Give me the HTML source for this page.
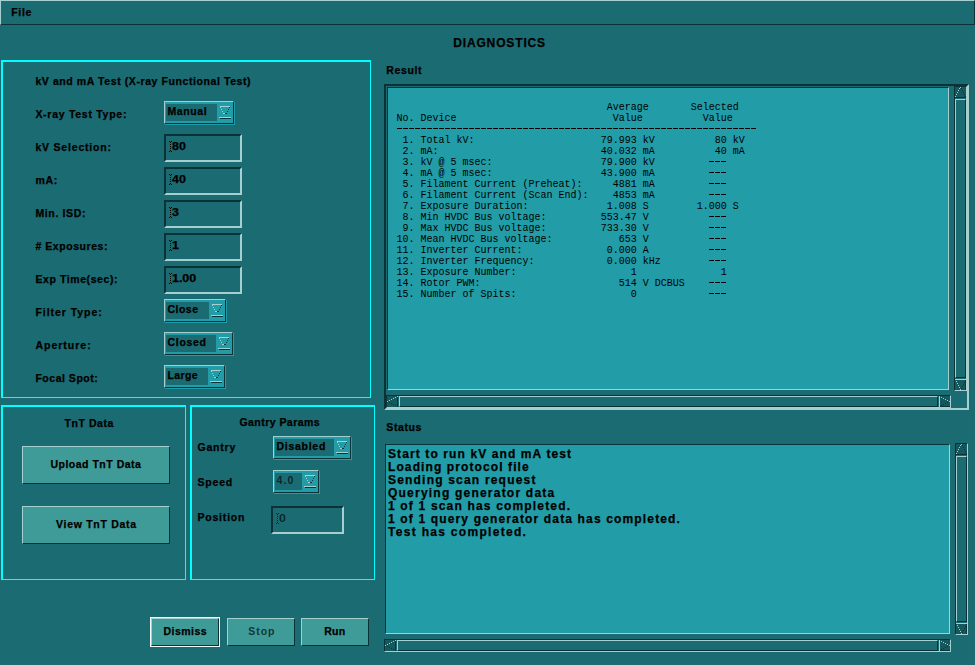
<!DOCTYPE html>
<html><head><meta charset="utf-8"><style>
html,body{margin:0;padding:0;width:975px;height:665px;overflow:hidden;background:#1b6b73;}
.a{position:absolute;box-sizing:border-box;}
.t{position:absolute;white-space:pre;}
.b{-webkit-text-stroke:0.25px #000;}
svg{shape-rendering:crispEdges;}
</style></head><body>
<div class="a" style="left:0px;top:0px;width:975px;height:25px;background:#1b6b73;border-top:1px solid #a6cfcf;border-left:1px solid #a6cfcf;border-right:1px solid #0b3236;border-bottom:1px solid #0b3236;"></div>
<div class="t b" style="left:11.20px;top:7.31px;font:bold 10.5px/10.5px 'Liberation Sans',sans-serif;letter-spacing:0.684px;color:#000;">File</div>
<div class="t b" style="left:453.20px;top:37.04px;font:bold 12px/12px 'Liberation Sans',sans-serif;letter-spacing:0.857px;color:#000;">DIAGNOSTICS</div>
<div class="a" style="left:1px;top:60px;width:370px;height:338px;border-top:2px solid #00ffff;border-left:2px solid #00ffff;border-right:1px solid #00ffff;border-bottom:1px solid #00ffff;"></div>
<div class="t b" style="left:35.40px;top:76.01px;font:bold 10.5px/10.5px 'Liberation Sans',sans-serif;letter-spacing:0.587px;color:#000;">kV and mA Test (X-ray Functional Test)</div>
<div class="t b" style="left:35.40px;top:109.21px;font:bold 10.5px/10.5px 'Liberation Sans',sans-serif;letter-spacing:0.724px;color:#000;">X-ray Test Type:</div>
<div class="t b" style="left:35.40px;top:142.16px;font:bold 10.5px/10.5px 'Liberation Sans',sans-serif;letter-spacing:0.805px;color:#000;">kV Selection:</div>
<div class="t b" style="left:35.40px;top:175.11px;font:bold 10.5px/10.5px 'Liberation Sans',sans-serif;letter-spacing:0.741px;color:#000;">mA:</div>
<div class="t b" style="left:35.40px;top:208.06px;font:bold 10.5px/10.5px 'Liberation Sans',sans-serif;letter-spacing:0.648px;color:#000;">Min. ISD:</div>
<div class="t b" style="left:35.40px;top:241.01px;font:bold 10.5px/10.5px 'Liberation Sans',sans-serif;letter-spacing:0.559px;color:#000;"># Exposures:</div>
<div class="t b" style="left:35.40px;top:273.96px;font:bold 10.5px/10.5px 'Liberation Sans',sans-serif;letter-spacing:0.584px;color:#000;">Exp Time(sec):</div>
<div class="t b" style="left:35.40px;top:306.91px;font:bold 10.5px/10.5px 'Liberation Sans',sans-serif;letter-spacing:0.953px;color:#000;">Filter Type:</div>
<div class="t b" style="left:35.40px;top:339.86px;font:bold 10.5px/10.5px 'Liberation Sans',sans-serif;letter-spacing:1.005px;color:#000;">Aperture:</div>
<div class="t b" style="left:35.40px;top:372.81px;font:bold 10.5px/10.5px 'Liberation Sans',sans-serif;letter-spacing:0.523px;color:#000;">Focal Spot:</div>
<div class="a" style="left:164px;top:101px;width:70px;height:23px;background:#229ca6;border-top:1px solid #a6cfcf;border-left:1px solid #a6cfcf;border-right:1px solid #0b3236;border-bottom:1px solid #0b3236;"></div>
<div class="a" style="left:234px;top:102px;width:1px;height:23px;background:#229ca6;"></div>
<div class="a" style="left:165px;top:124px;width:70px;height:1px;background:#229ca6;"></div>
<div class="a" style="left:166px;top:104px;width:51px;height:17px;background:#1b6b73;"></div>
<div class="t b" style="left:167.50px;top:106.31px;font:bold 10.5px/10.5px 'Liberation Sans',sans-serif;letter-spacing:0.609px;color:#000;">Manual</div>
<svg class="a" style="left:219px;top:106px" width="13" height="14"><rect x="1" y="0" width="10" height="1" fill="#a6cfcf"/><rect x="1" y="1" width="1" height="1" fill="#a6cfcf"/><rect x="2" y="3" width="1" height="1" fill="#a6cfcf"/><rect x="3" y="5" width="1" height="1" fill="#a6cfcf"/><rect x="4" y="7" width="1" height="1" fill="#a6cfcf"/><rect x="5" y="7" width="1" height="1" fill="#a6cfcf"/><rect x="10" y="1" width="1" height="1" fill="#0b3236"/><rect x="9" y="3" width="1" height="1" fill="#0b3236"/><rect x="8" y="5" width="1" height="1" fill="#0b3236"/><rect x="7" y="7" width="1" height="1" fill="#0b3236"/><rect x="6" y="7" width="1" height="1" fill="#0b3236"/><rect x="0" y="11" width="12" height="1" fill="#a6cfcf"/><rect x="1" y="12" width="11" height="1" fill="#0b3236"/></svg>
<div class="a" style="left:164px;top:134px;width:78px;height:28px;background:#1b6b73;border-top:2px solid #0b3236;border-left:2px solid #0b3236;border-right:2px solid #a6cfcf;border-bottom:2px solid #a6cfcf;"></div>
<svg class="a" style="left:169px;top:141px" width="3" height="11"><rect x="0" y="0" width="1" height="1" fill="#000"/><rect x="2" y="0" width="1" height="1" fill="#000"/><rect x="1" y="1" width="1" height="1" fill="#000"/><rect x="1" y="3" width="1" height="1" fill="#000"/><rect x="1" y="5" width="1" height="1" fill="#000"/><rect x="1" y="7" width="1" height="1" fill="#000"/><rect x="1" y="9" width="1" height="1" fill="#000"/><rect x="0" y="10" width="1" height="1" fill="#000"/><rect x="2" y="10" width="1" height="1" fill="#000"/></svg>
<div class="t b" style="left:171.50px;top:141.39px;font:bold 11px/11px 'Liberation Sans',sans-serif;letter-spacing:0.000px;color:#000;transform:scaleX(1.13);transform-origin:0 0;">80</div>
<div class="a" style="left:164px;top:167px;width:78px;height:28px;background:#1b6b73;border-top:2px solid #0b3236;border-left:2px solid #0b3236;border-right:2px solid #a6cfcf;border-bottom:2px solid #a6cfcf;"></div>
<svg class="a" style="left:169px;top:174px" width="3" height="11"><rect x="0" y="0" width="1" height="1" fill="#000"/><rect x="2" y="0" width="1" height="1" fill="#000"/><rect x="1" y="1" width="1" height="1" fill="#000"/><rect x="1" y="3" width="1" height="1" fill="#000"/><rect x="1" y="5" width="1" height="1" fill="#000"/><rect x="1" y="7" width="1" height="1" fill="#000"/><rect x="1" y="9" width="1" height="1" fill="#000"/><rect x="0" y="10" width="1" height="1" fill="#000"/><rect x="2" y="10" width="1" height="1" fill="#000"/></svg>
<div class="t b" style="left:171.50px;top:174.39px;font:bold 11px/11px 'Liberation Sans',sans-serif;letter-spacing:0.000px;color:#000;transform:scaleX(1.13);transform-origin:0 0;">40</div>
<div class="a" style="left:164px;top:200px;width:78px;height:28px;background:#1b6b73;border-top:2px solid #0b3236;border-left:2px solid #0b3236;border-right:2px solid #a6cfcf;border-bottom:2px solid #a6cfcf;"></div>
<svg class="a" style="left:169px;top:207px" width="3" height="11"><rect x="0" y="0" width="1" height="1" fill="#000"/><rect x="2" y="0" width="1" height="1" fill="#000"/><rect x="1" y="1" width="1" height="1" fill="#000"/><rect x="1" y="3" width="1" height="1" fill="#000"/><rect x="1" y="5" width="1" height="1" fill="#000"/><rect x="1" y="7" width="1" height="1" fill="#000"/><rect x="1" y="9" width="1" height="1" fill="#000"/><rect x="0" y="10" width="1" height="1" fill="#000"/><rect x="2" y="10" width="1" height="1" fill="#000"/></svg>
<div class="t b" style="left:171.50px;top:207.39px;font:bold 11px/11px 'Liberation Sans',sans-serif;letter-spacing:0.000px;color:#000;transform:scaleX(1.13);transform-origin:0 0;">3</div>
<div class="a" style="left:164px;top:233px;width:78px;height:28px;background:#1b6b73;border-top:2px solid #0b3236;border-left:2px solid #0b3236;border-right:2px solid #a6cfcf;border-bottom:2px solid #a6cfcf;"></div>
<svg class="a" style="left:169px;top:240px" width="3" height="11"><rect x="0" y="0" width="1" height="1" fill="#000"/><rect x="2" y="0" width="1" height="1" fill="#000"/><rect x="1" y="1" width="1" height="1" fill="#000"/><rect x="1" y="3" width="1" height="1" fill="#000"/><rect x="1" y="5" width="1" height="1" fill="#000"/><rect x="1" y="7" width="1" height="1" fill="#000"/><rect x="1" y="9" width="1" height="1" fill="#000"/><rect x="0" y="10" width="1" height="1" fill="#000"/><rect x="2" y="10" width="1" height="1" fill="#000"/></svg>
<div class="t b" style="left:171.50px;top:240.39px;font:bold 11px/11px 'Liberation Sans',sans-serif;letter-spacing:0.000px;color:#000;transform:scaleX(1.13);transform-origin:0 0;">1</div>
<div class="a" style="left:164px;top:266px;width:78px;height:28px;background:#1b6b73;border-top:2px solid #0b3236;border-left:2px solid #0b3236;border-right:2px solid #a6cfcf;border-bottom:2px solid #a6cfcf;"></div>
<svg class="a" style="left:169px;top:273px" width="3" height="11"><rect x="0" y="0" width="1" height="1" fill="#000"/><rect x="2" y="0" width="1" height="1" fill="#000"/><rect x="1" y="1" width="1" height="1" fill="#000"/><rect x="1" y="3" width="1" height="1" fill="#000"/><rect x="1" y="5" width="1" height="1" fill="#000"/><rect x="1" y="7" width="1" height="1" fill="#000"/><rect x="1" y="9" width="1" height="1" fill="#000"/><rect x="0" y="10" width="1" height="1" fill="#000"/><rect x="2" y="10" width="1" height="1" fill="#000"/></svg>
<div class="t b" style="left:171.50px;top:273.39px;font:bold 11px/11px 'Liberation Sans',sans-serif;letter-spacing:0.000px;color:#000;transform:scaleX(1.13);transform-origin:0 0;">1.00</div>
<div class="a" style="left:164px;top:299px;width:62px;height:23px;background:#229ca6;border-top:1px solid #a6cfcf;border-left:1px solid #a6cfcf;border-right:1px solid #0b3236;border-bottom:1px solid #0b3236;"></div>
<div class="a" style="left:226px;top:300px;width:1px;height:23px;background:#229ca6;"></div>
<div class="a" style="left:165px;top:322px;width:62px;height:1px;background:#229ca6;"></div>
<div class="a" style="left:166px;top:302px;width:43px;height:17px;background:#1b6b73;"></div>
<div class="t b" style="left:167.50px;top:304.31px;font:bold 10.5px/10.5px 'Liberation Sans',sans-serif;letter-spacing:0.487px;color:#000;">Close</div>
<svg class="a" style="left:211px;top:304px" width="13" height="14"><rect x="1" y="0" width="10" height="1" fill="#a6cfcf"/><rect x="1" y="1" width="1" height="1" fill="#a6cfcf"/><rect x="2" y="3" width="1" height="1" fill="#a6cfcf"/><rect x="3" y="5" width="1" height="1" fill="#a6cfcf"/><rect x="4" y="7" width="1" height="1" fill="#a6cfcf"/><rect x="5" y="7" width="1" height="1" fill="#a6cfcf"/><rect x="10" y="1" width="1" height="1" fill="#0b3236"/><rect x="9" y="3" width="1" height="1" fill="#0b3236"/><rect x="8" y="5" width="1" height="1" fill="#0b3236"/><rect x="7" y="7" width="1" height="1" fill="#0b3236"/><rect x="6" y="7" width="1" height="1" fill="#0b3236"/><rect x="0" y="11" width="12" height="1" fill="#a6cfcf"/><rect x="1" y="12" width="11" height="1" fill="#0b3236"/></svg>
<div class="a" style="left:164px;top:332px;width:69px;height:23px;background:#229ca6;border-top:1px solid #a6cfcf;border-left:1px solid #a6cfcf;border-right:1px solid #0b3236;border-bottom:1px solid #0b3236;"></div>
<div class="a" style="left:233px;top:333px;width:1px;height:23px;background:#229ca6;"></div>
<div class="a" style="left:165px;top:355px;width:69px;height:1px;background:#229ca6;"></div>
<div class="a" style="left:166px;top:335px;width:50px;height:17px;background:#1b6b73;"></div>
<div class="t b" style="left:167.50px;top:337.31px;font:bold 10.5px/10.5px 'Liberation Sans',sans-serif;letter-spacing:0.701px;color:#000;">Closed</div>
<svg class="a" style="left:218px;top:337px" width="13" height="14"><rect x="1" y="0" width="10" height="1" fill="#a6cfcf"/><rect x="1" y="1" width="1" height="1" fill="#a6cfcf"/><rect x="2" y="3" width="1" height="1" fill="#a6cfcf"/><rect x="3" y="5" width="1" height="1" fill="#a6cfcf"/><rect x="4" y="7" width="1" height="1" fill="#a6cfcf"/><rect x="5" y="7" width="1" height="1" fill="#a6cfcf"/><rect x="10" y="1" width="1" height="1" fill="#0b3236"/><rect x="9" y="3" width="1" height="1" fill="#0b3236"/><rect x="8" y="5" width="1" height="1" fill="#0b3236"/><rect x="7" y="7" width="1" height="1" fill="#0b3236"/><rect x="6" y="7" width="1" height="1" fill="#0b3236"/><rect x="0" y="11" width="12" height="1" fill="#a6cfcf"/><rect x="1" y="12" width="11" height="1" fill="#0b3236"/></svg>
<div class="a" style="left:164px;top:365px;width:61px;height:23px;background:#229ca6;border-top:1px solid #a6cfcf;border-left:1px solid #a6cfcf;border-right:1px solid #0b3236;border-bottom:1px solid #0b3236;"></div>
<div class="a" style="left:225px;top:366px;width:1px;height:23px;background:#229ca6;"></div>
<div class="a" style="left:165px;top:388px;width:61px;height:1px;background:#229ca6;"></div>
<div class="a" style="left:166px;top:368px;width:42px;height:17px;background:#1b6b73;"></div>
<div class="t b" style="left:167.50px;top:370.31px;font:bold 10.5px/10.5px 'Liberation Sans',sans-serif;letter-spacing:0.362px;color:#000;">Large</div>
<svg class="a" style="left:210px;top:370px" width="13" height="14"><rect x="1" y="0" width="10" height="1" fill="#a6cfcf"/><rect x="1" y="1" width="1" height="1" fill="#a6cfcf"/><rect x="2" y="3" width="1" height="1" fill="#a6cfcf"/><rect x="3" y="5" width="1" height="1" fill="#a6cfcf"/><rect x="4" y="7" width="1" height="1" fill="#a6cfcf"/><rect x="5" y="7" width="1" height="1" fill="#a6cfcf"/><rect x="10" y="1" width="1" height="1" fill="#0b3236"/><rect x="9" y="3" width="1" height="1" fill="#0b3236"/><rect x="8" y="5" width="1" height="1" fill="#0b3236"/><rect x="7" y="7" width="1" height="1" fill="#0b3236"/><rect x="6" y="7" width="1" height="1" fill="#0b3236"/><rect x="0" y="11" width="12" height="1" fill="#a6cfcf"/><rect x="1" y="12" width="11" height="1" fill="#0b3236"/></svg>
<div class="a" style="left:1px;top:405px;width:185px;height:175px;border-top:2px solid #00ffff;border-left:2px solid #00ffff;border-right:1px solid #00ffff;border-bottom:1px solid #00ffff;"></div>
<div class="t b" style="left:64.50px;top:417.61px;font:bold 10.5px/10.5px 'Liberation Sans',sans-serif;letter-spacing:0.560px;color:#000;">TnT Data</div>
<div class="a" style="left:22px;top:446px;width:148px;height:38px;background:#3f9b98;border-top:1px solid #a6cfcf;border-left:1px solid #a6cfcf;border-right:1px solid #0b3236;border-bottom:1px solid #0b3236;"></div>
<div class="t b" style="left:50.40px;top:459.41px;font:bold 10.5px/10.5px 'Liberation Sans',sans-serif;letter-spacing:0.509px;color:#000;">Upload TnT Data</div>
<div class="a" style="left:22px;top:506px;width:148px;height:38px;background:#3f9b98;border-top:1px solid #a6cfcf;border-left:1px solid #a6cfcf;border-right:1px solid #0b3236;border-bottom:1px solid #0b3236;"></div>
<div class="t b" style="left:56.10px;top:519.31px;font:bold 10.5px/10.5px 'Liberation Sans',sans-serif;letter-spacing:0.697px;color:#000;">View TnT Data</div>
<div class="a" style="left:190px;top:405px;width:185px;height:175px;border-top:2px solid #00ffff;border-left:2px solid #00ffff;border-right:1px solid #00ffff;border-bottom:1px solid #00ffff;"></div>
<div class="t b" style="left:239.40px;top:417.31px;font:bold 10.5px/10.5px 'Liberation Sans',sans-serif;letter-spacing:0.461px;color:#000;">Gantry Params</div>
<div class="t b" style="left:197.40px;top:442.21px;font:bold 10.5px/10.5px 'Liberation Sans',sans-serif;letter-spacing:0.819px;color:#000;">Gantry</div>
<div class="t b" style="left:197.40px;top:477.01px;font:bold 10.5px/10.5px 'Liberation Sans',sans-serif;letter-spacing:0.826px;color:#000;">Speed</div>
<div class="t b" style="left:197.40px;top:512.21px;font:bold 10.5px/10.5px 'Liberation Sans',sans-serif;letter-spacing:0.814px;color:#000;">Position</div>
<div class="a" style="left:273px;top:436px;width:78px;height:23px;background:#229ca6;border-top:1px solid #a6cfcf;border-left:1px solid #a6cfcf;border-right:1px solid #0b3236;border-bottom:1px solid #0b3236;"></div>
<div class="a" style="left:351px;top:437px;width:1px;height:23px;background:#229ca6;"></div>
<div class="a" style="left:274px;top:459px;width:78px;height:1px;background:#229ca6;"></div>
<div class="a" style="left:275px;top:439px;width:59px;height:17px;background:#1b6b73;"></div>
<div class="t b" style="left:276.50px;top:441.31px;font:bold 10.5px/10.5px 'Liberation Sans',sans-serif;letter-spacing:0.721px;color:#000;">Disabled</div>
<svg class="a" style="left:336px;top:441px" width="13" height="14"><rect x="1" y="0" width="10" height="1" fill="#a6cfcf"/><rect x="1" y="1" width="1" height="1" fill="#a6cfcf"/><rect x="2" y="3" width="1" height="1" fill="#a6cfcf"/><rect x="3" y="5" width="1" height="1" fill="#a6cfcf"/><rect x="4" y="7" width="1" height="1" fill="#a6cfcf"/><rect x="5" y="7" width="1" height="1" fill="#a6cfcf"/><rect x="10" y="1" width="1" height="1" fill="#0b3236"/><rect x="9" y="3" width="1" height="1" fill="#0b3236"/><rect x="8" y="5" width="1" height="1" fill="#0b3236"/><rect x="7" y="7" width="1" height="1" fill="#0b3236"/><rect x="6" y="7" width="1" height="1" fill="#0b3236"/><rect x="0" y="11" width="12" height="1" fill="#a6cfcf"/><rect x="1" y="12" width="11" height="1" fill="#0b3236"/></svg>
<div class="a" style="left:273px;top:470px;width:46px;height:23px;background:#229ca6;border-top:1px solid #a6cfcf;border-left:1px solid #a6cfcf;border-right:1px solid #0b3236;border-bottom:1px solid #0b3236;"></div>
<div class="a" style="left:319px;top:471px;width:1px;height:23px;background:#229ca6;"></div>
<div class="a" style="left:274px;top:493px;width:46px;height:1px;background:#229ca6;"></div>
<div class="a" style="left:275px;top:473px;width:27px;height:17px;background:#1b6b73;"></div>
<div class="t" style="left:276.50px;top:475.31px;font:bold 10.5px/10.5px 'Liberation Sans',sans-serif;letter-spacing:1.122px;color:rgba(0,0,0,0.65);">4.0</div>
<svg class="a" style="left:304px;top:475px" width="13" height="14"><rect x="1" y="0" width="10" height="1" fill="#a6cfcf"/><rect x="1" y="1" width="1" height="1" fill="#a6cfcf"/><rect x="2" y="3" width="1" height="1" fill="#a6cfcf"/><rect x="3" y="5" width="1" height="1" fill="#a6cfcf"/><rect x="4" y="7" width="1" height="1" fill="#a6cfcf"/><rect x="5" y="7" width="1" height="1" fill="#a6cfcf"/><rect x="10" y="1" width="1" height="1" fill="#0b3236"/><rect x="9" y="3" width="1" height="1" fill="#0b3236"/><rect x="8" y="5" width="1" height="1" fill="#0b3236"/><rect x="7" y="7" width="1" height="1" fill="#0b3236"/><rect x="6" y="7" width="1" height="1" fill="#0b3236"/><rect x="0" y="11" width="12" height="1" fill="#a6cfcf"/><rect x="1" y="12" width="11" height="1" fill="#0b3236"/></svg>
<div class="a" style="left:271px;top:506px;width:73px;height:28px;background:#1b6b73;border-top:2px solid #0b3236;border-left:2px solid #0b3236;border-right:2px solid #a6cfcf;border-bottom:2px solid #a6cfcf;"></div>
<svg class="a" style="left:276px;top:513px" width="3" height="11"><rect x="0" y="0" width="1" height="1" fill="rgba(0,0,0,0.65)"/><rect x="2" y="0" width="1" height="1" fill="rgba(0,0,0,0.65)"/><rect x="1" y="1" width="1" height="1" fill="rgba(0,0,0,0.65)"/><rect x="1" y="3" width="1" height="1" fill="rgba(0,0,0,0.65)"/><rect x="1" y="5" width="1" height="1" fill="rgba(0,0,0,0.65)"/><rect x="1" y="7" width="1" height="1" fill="rgba(0,0,0,0.65)"/><rect x="1" y="9" width="1" height="1" fill="rgba(0,0,0,0.65)"/><rect x="0" y="10" width="1" height="1" fill="rgba(0,0,0,0.65)"/><rect x="2" y="10" width="1" height="1" fill="rgba(0,0,0,0.65)"/></svg>
<div class="t" style="left:278.50px;top:513.39px;font:bold 11px/11px 'Liberation Sans',sans-serif;letter-spacing:0.000px;color:rgba(0,0,0,0.65);transform:scaleX(1.13);transform-origin:0 0;">0</div>
<div class="a" style="left:150px;top:617px;width:70px;height:30px;border-top:1px solid #f6fbfb;border-left:1px solid #f6fbfb;border-right:1px solid #f6fbfb;border-bottom:1px solid #f6fbfb;"></div>
<div class="a" style="left:151px;top:618px;width:68px;height:28px;background:#3f9b98;border-top:1px solid #a6cfcf;border-left:1px solid #a6cfcf;border-right:1px solid #0b3236;border-bottom:1px solid #0b3236;"></div>
<div class="t b" style="left:163.40px;top:626.11px;font:bold 10.5px/10.5px 'Liberation Sans',sans-serif;letter-spacing:0.495px;color:#000;">Dismiss</div>
<div class="a" style="left:227px;top:618px;width:68px;height:28px;background:#3f9b98;border-top:1px solid #a6cfcf;border-left:1px solid #a6cfcf;border-right:1px solid #0b3236;border-bottom:1px solid #0b3236;"></div>
<div class="t" style="left:248.30px;top:626.11px;font:bold 10.5px/10.5px 'Liberation Sans',sans-serif;letter-spacing:0.929px;color:rgba(0,0,0,0.68);">Stop</div>
<div class="a" style="left:301px;top:618px;width:68px;height:28px;background:#3f9b98;border-top:1px solid #a6cfcf;border-left:1px solid #a6cfcf;border-right:1px solid #0b3236;border-bottom:1px solid #0b3236;"></div>
<div class="t b" style="left:324.20px;top:626.11px;font:bold 10.5px/10.5px 'Liberation Sans',sans-serif;letter-spacing:0.302px;color:#000;">Run</div>
<div class="t b" style="left:386.20px;top:65.11px;font:bold 10.5px/10.5px 'Liberation Sans',sans-serif;letter-spacing:0.661px;color:#000;">Result</div>
<div class="a" style="left:384px;top:84px;width:585px;height:326px;background:#1b6b73;border-top:2px solid #0b3236;border-left:2px solid #0b3236;border-right:2px solid #a6cfcf;border-bottom:2px solid #a6cfcf;"></div>
<div class="a" style="left:387px;top:87px;width:562px;height:303px;background:#229ca6;border-top:1px solid #0b3236;border-left:1px solid #0b3236;border-right:1px solid #a6cfcf;border-bottom:1px solid #a6cfcf;"></div>
<div class="a" style="left:954px;top:86px;width:13px;height:305px;background:#1b6b73;border-top:1px solid #0b3236;border-left:1px solid #0b3236;border-right:1px solid #a6cfcf;border-bottom:1px solid #a6cfcf;"></div>
<svg class="a" style="left:955px;top:87px" width="11" height="11"><rect width="11" height="11" fill="#15595f"/><rect x="0" y="9" width="1" height="1" fill="#a6cfcf"/><rect x="1" y="7" width="1" height="1" fill="#a6cfcf"/><rect x="2" y="5" width="1" height="1" fill="#a6cfcf"/><rect x="3" y="3" width="1" height="1" fill="#a6cfcf"/><rect x="4" y="1" width="1" height="1" fill="#a6cfcf"/><rect x="5" y="0" width="1" height="1" fill="#a6cfcf"/><rect x="6" y="1" width="1" height="1" fill="#0b3236"/><rect x="7" y="3" width="1" height="1" fill="#0b3236"/><rect x="8" y="5" width="1" height="1" fill="#0b3236"/><rect x="9" y="7" width="1" height="1" fill="#0b3236"/><rect x="10" y="9" width="1" height="1" fill="#0b3236"/><rect x="0" y="10" width="11" height="1" fill="#0b3236"/></svg>
<div class="a" style="left:955px;top:99px;width:11px;height:279px;background:#1b6b73;border-top:1px solid #a6cfcf;border-left:1px solid #a6cfcf;border-right:1px solid #0b3236;border-bottom:1px solid #0b3236;"></div>
<svg class="a" style="left:955px;top:379px" width="11" height="11"><rect width="11" height="11" fill="#15595f"/><rect x="0" y="0" width="11" height="1" fill="#a6cfcf"/><rect x="10" y="1" width="1" height="10" fill="#0b3236"/><rect x="1" y="2" width="1" height="1" fill="#a6cfcf"/><rect x="2" y="4" width="1" height="1" fill="#a6cfcf"/><rect x="3" y="6" width="1" height="1" fill="#a6cfcf"/><rect x="4" y="8" width="1" height="1" fill="#a6cfcf"/><rect x="5" y="10" width="1" height="1" fill="#a6cfcf"/><rect x="9" y="3" width="1" height="1" fill="#0b3236"/><rect x="8" y="5" width="1" height="1" fill="#0b3236"/><rect x="7" y="7" width="1" height="1" fill="#0b3236"/><rect x="6" y="9" width="1" height="1" fill="#0b3236"/></svg>
<div class="a" style="left:386px;top:395px;width:565px;height:13px;background:#1b6b73;border-top:1px solid #0b3236;border-left:1px solid #0b3236;border-right:1px solid #a6cfcf;border-bottom:1px solid #a6cfcf;"></div>
<svg class="a" style="left:387px;top:396px" width="11" height="11"><rect width="11" height="11" fill="#15595f"/><rect x="0" y="5" width="1" height="1" fill="#a6cfcf"/><rect x="2" y="4" width="1" height="1" fill="#a6cfcf"/><rect x="4" y="3" width="1" height="1" fill="#a6cfcf"/><rect x="6" y="2" width="1" height="1" fill="#a6cfcf"/><rect x="8" y="1" width="1" height="1" fill="#a6cfcf"/><rect x="10" y="0" width="1" height="1" fill="#a6cfcf"/><rect x="10" y="1" width="1" height="10" fill="#0b3236"/><rect x="2" y="6" width="1" height="1" fill="#0b3236"/><rect x="4" y="7" width="1" height="1" fill="#0b3236"/><rect x="6" y="8" width="1" height="1" fill="#0b3236"/><rect x="8" y="9" width="1" height="1" fill="#0b3236"/></svg>
<div class="a" style="left:399px;top:396px;width:539px;height:11px;background:#1b6b73;border-top:1px solid #a6cfcf;border-left:1px solid #a6cfcf;border-right:1px solid #0b3236;border-bottom:1px solid #0b3236;"></div>
<svg class="a" style="left:939px;top:396px" width="11" height="11"><rect width="11" height="11" fill="#15595f"/><rect x="0" y="0" width="1" height="11" fill="#a6cfcf"/><rect x="1" y="10" width="10" height="1" fill="#0b3236"/><rect x="2" y="1" width="1" height="1" fill="#a6cfcf"/><rect x="4" y="2" width="1" height="1" fill="#a6cfcf"/><rect x="6" y="3" width="1" height="1" fill="#a6cfcf"/><rect x="8" y="4" width="1" height="1" fill="#a6cfcf"/><rect x="10" y="5" width="1" height="1" fill="#a6cfcf"/><rect x="8" y="6" width="1" height="1" fill="#0b3236"/><rect x="6" y="7" width="1" height="1" fill="#0b3236"/><rect x="4" y="8" width="1" height="1" fill="#0b3236"/><rect x="2" y="9" width="1" height="1" fill="#0b3236"/></svg>
<svg class="a" style="left:397px;top:128px" width="360" height="1"><path d="M0 0.5H360" stroke="#000" stroke-dasharray="5 1"/></svg>
<svg class="a" style="left:709px;top:161px" width="18" height="1"><path d="M0 0.5H18" stroke="#000" stroke-dasharray="5 1"/></svg>
<svg class="a" style="left:709px;top:172px" width="18" height="1"><path d="M0 0.5H18" stroke="#000" stroke-dasharray="5 1"/></svg>
<svg class="a" style="left:709px;top:183px" width="18" height="1"><path d="M0 0.5H18" stroke="#000" stroke-dasharray="5 1"/></svg>
<svg class="a" style="left:709px;top:194px" width="18" height="1"><path d="M0 0.5H18" stroke="#000" stroke-dasharray="5 1"/></svg>
<svg class="a" style="left:709px;top:216px" width="18" height="1"><path d="M0 0.5H18" stroke="#000" stroke-dasharray="5 1"/></svg>
<svg class="a" style="left:709px;top:227px" width="18" height="1"><path d="M0 0.5H18" stroke="#000" stroke-dasharray="5 1"/></svg>
<svg class="a" style="left:709px;top:238px" width="18" height="1"><path d="M0 0.5H18" stroke="#000" stroke-dasharray="5 1"/></svg>
<svg class="a" style="left:709px;top:249px" width="18" height="1"><path d="M0 0.5H18" stroke="#000" stroke-dasharray="5 1"/></svg>
<svg class="a" style="left:709px;top:260px" width="18" height="1"><path d="M0 0.5H18" stroke="#000" stroke-dasharray="5 1"/></svg>
<svg class="a" style="left:709px;top:282px" width="18" height="1"><path d="M0 0.5H18" stroke="#000" stroke-dasharray="5 1"/></svg>
<svg class="a" style="left:709px;top:293px" width="18" height="1"><path d="M0 0.5H18" stroke="#000" stroke-dasharray="5 1"/></svg>
<div class="t" style="left:396.6px;top:102.47px;font:normal 10px/11px 'Liberation Mono',monospace;color:#000">                                   Average       Selected
No. Device                          Value          Value

 1. Total kV:                     79.993 kV          80 kV
 2. mA:                           40.032 mA          40 mA
 3. kV @ 5 msec:                  79.900 kV            
 4. mA @ 5 msec:                  43.900 mA            
 5. Filament Current (Preheat):     4881 mA            
 6. Filament Current (Scan End):    4853 mA            
 7. Exposure Duration:             1.008 S        1.000 S
 8. Min HVDC Bus voltage:         553.47 V             
 9. Max HVDC Bus voltage:         733.30 V             
10. Mean HVDC Bus voltage:           653 V             
11. Inverter Current:              0.000 A             
12. Inverter Frequency:            0.000 kHz           
13. Exposure Number:                   1              1
14. Rotor PWM:                       514 V DCBUS       
15. Number of Spits:                   0               </div>
<div class="t b" style="left:386.30px;top:422.21px;font:bold 10.5px/10.5px 'Liberation Sans',sans-serif;letter-spacing:0.610px;color:#000;">Status</div>
<div class="a" style="left:385px;top:444px;width:565px;height:190px;background:#229ca6;border-top:1px solid #0b3236;border-left:1px solid #0b3236;border-right:1px solid #a6cfcf;border-bottom:1px solid #a6cfcf;"></div>
<div class="a" style="left:955px;top:443px;width:13px;height:192px;background:#1b6b73;border-top:1px solid #0b3236;border-left:1px solid #0b3236;border-right:1px solid #a6cfcf;border-bottom:1px solid #a6cfcf;"></div>
<svg class="a" style="left:956px;top:444px" width="11" height="11"><rect width="11" height="11" fill="#15595f"/><rect x="0" y="9" width="1" height="1" fill="#a6cfcf"/><rect x="1" y="7" width="1" height="1" fill="#a6cfcf"/><rect x="2" y="5" width="1" height="1" fill="#a6cfcf"/><rect x="3" y="3" width="1" height="1" fill="#a6cfcf"/><rect x="4" y="1" width="1" height="1" fill="#a6cfcf"/><rect x="5" y="0" width="1" height="1" fill="#a6cfcf"/><rect x="6" y="1" width="1" height="1" fill="#0b3236"/><rect x="7" y="3" width="1" height="1" fill="#0b3236"/><rect x="8" y="5" width="1" height="1" fill="#0b3236"/><rect x="9" y="7" width="1" height="1" fill="#0b3236"/><rect x="10" y="9" width="1" height="1" fill="#0b3236"/><rect x="0" y="10" width="11" height="1" fill="#0b3236"/></svg>
<div class="a" style="left:956px;top:456px;width:11px;height:166px;background:#1b6b73;border-top:1px solid #a6cfcf;border-left:1px solid #a6cfcf;border-right:1px solid #0b3236;border-bottom:1px solid #0b3236;"></div>
<svg class="a" style="left:956px;top:623px" width="11" height="11"><rect width="11" height="11" fill="#15595f"/><rect x="0" y="0" width="11" height="1" fill="#a6cfcf"/><rect x="10" y="1" width="1" height="10" fill="#0b3236"/><rect x="1" y="2" width="1" height="1" fill="#a6cfcf"/><rect x="2" y="4" width="1" height="1" fill="#a6cfcf"/><rect x="3" y="6" width="1" height="1" fill="#a6cfcf"/><rect x="4" y="8" width="1" height="1" fill="#a6cfcf"/><rect x="5" y="10" width="1" height="1" fill="#a6cfcf"/><rect x="9" y="3" width="1" height="1" fill="#0b3236"/><rect x="8" y="5" width="1" height="1" fill="#0b3236"/><rect x="7" y="7" width="1" height="1" fill="#0b3236"/><rect x="6" y="9" width="1" height="1" fill="#0b3236"/></svg>
<div class="a" style="left:384px;top:639px;width:567px;height:13px;background:#1b6b73;border-top:1px solid #0b3236;border-left:1px solid #0b3236;border-right:1px solid #a6cfcf;border-bottom:1px solid #a6cfcf;"></div>
<svg class="a" style="left:385px;top:640px" width="11" height="11"><rect width="11" height="11" fill="#15595f"/><rect x="0" y="5" width="1" height="1" fill="#a6cfcf"/><rect x="2" y="4" width="1" height="1" fill="#a6cfcf"/><rect x="4" y="3" width="1" height="1" fill="#a6cfcf"/><rect x="6" y="2" width="1" height="1" fill="#a6cfcf"/><rect x="8" y="1" width="1" height="1" fill="#a6cfcf"/><rect x="10" y="0" width="1" height="1" fill="#a6cfcf"/><rect x="10" y="1" width="1" height="10" fill="#0b3236"/><rect x="2" y="6" width="1" height="1" fill="#0b3236"/><rect x="4" y="7" width="1" height="1" fill="#0b3236"/><rect x="6" y="8" width="1" height="1" fill="#0b3236"/><rect x="8" y="9" width="1" height="1" fill="#0b3236"/></svg>
<div class="a" style="left:397px;top:640px;width:541px;height:11px;background:#1b6b73;border-top:1px solid #a6cfcf;border-left:1px solid #a6cfcf;border-right:1px solid #0b3236;border-bottom:1px solid #0b3236;"></div>
<svg class="a" style="left:939px;top:640px" width="11" height="11"><rect width="11" height="11" fill="#15595f"/><rect x="0" y="0" width="1" height="11" fill="#a6cfcf"/><rect x="1" y="10" width="10" height="1" fill="#0b3236"/><rect x="2" y="1" width="1" height="1" fill="#a6cfcf"/><rect x="4" y="2" width="1" height="1" fill="#a6cfcf"/><rect x="6" y="3" width="1" height="1" fill="#a6cfcf"/><rect x="8" y="4" width="1" height="1" fill="#a6cfcf"/><rect x="10" y="5" width="1" height="1" fill="#a6cfcf"/><rect x="8" y="6" width="1" height="1" fill="#0b3236"/><rect x="6" y="7" width="1" height="1" fill="#0b3236"/><rect x="4" y="8" width="1" height="1" fill="#0b3236"/><rect x="2" y="9" width="1" height="1" fill="#0b3236"/></svg>
<div class="t b" style="left:388.00px;top:448.04px;font:bold 12px/12px 'Liberation Sans',sans-serif;letter-spacing:1.108px;color:#000;">Start to run kV and mA test</div>
<div class="t b" style="left:388.00px;top:461.04px;font:bold 12px/12px 'Liberation Sans',sans-serif;letter-spacing:1.101px;color:#000;">Loading protocol file</div>
<div class="t b" style="left:388.00px;top:474.04px;font:bold 12px/12px 'Liberation Sans',sans-serif;letter-spacing:1.195px;color:#000;">Sending scan request</div>
<div class="t b" style="left:388.00px;top:487.04px;font:bold 12px/12px 'Liberation Sans',sans-serif;letter-spacing:1.219px;color:#000;">Querying generator data</div>
<div class="t b" style="left:388.00px;top:500.04px;font:bold 12px/12px 'Liberation Sans',sans-serif;letter-spacing:1.173px;color:#000;">1 of 1 scan has completed.</div>
<div class="t b" style="left:388.00px;top:513.04px;font:bold 12px/12px 'Liberation Sans',sans-serif;letter-spacing:1.151px;color:#000;">1 of 1 query generator data has completed.</div>
<div class="t b" style="left:388.00px;top:526.04px;font:bold 12px/12px 'Liberation Sans',sans-serif;letter-spacing:1.303px;color:#000;">Test has completed.</div>
</body></html>
